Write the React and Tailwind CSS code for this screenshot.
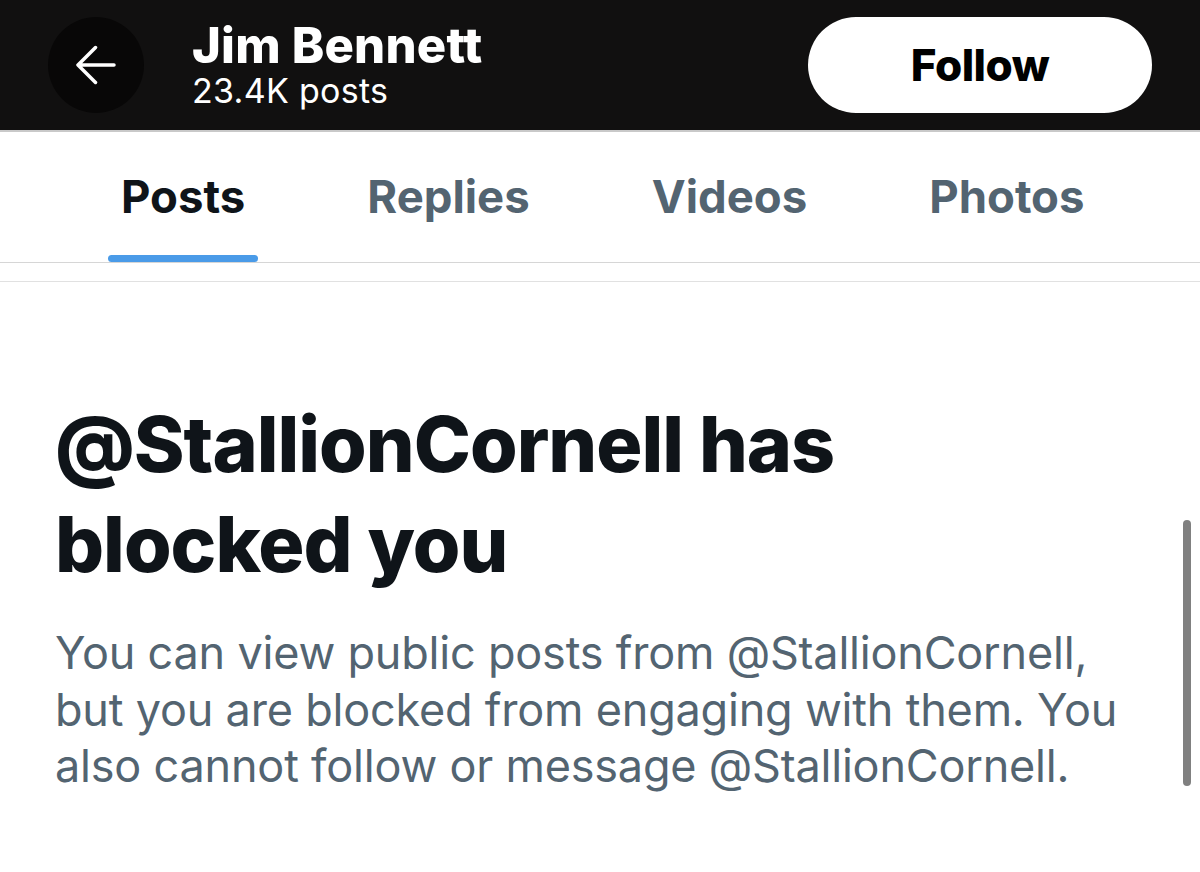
const tabs = [
  { label: 'Posts', active: true },
  { label: 'Replies' },
  { label: 'Videos' },
  { label: 'Photos' },
];

function BackArrow() {
  return (
    <svg viewBox="0 0 40 40" className="w-[40px] h-[40px]" fill="none" stroke="white" strokeWidth="3.5" strokeLinecap="round" strokeLinejoin="round" aria-hidden="true">
      <path d="M38 20H2.5M19.5 2.5L2 20l17.5 17.5" />
    </svg>
  );
}

function Header() {
  return (
    <header className="h-[132px] bg-[#111010] border-b-2 border-[#c9c9c9] flex items-center pl-[48px] pr-[48px]">
      <button className="w-[96px] h-[96px] rounded-full bg-[#080707] flex items-center justify-center shrink-0">
        <BackArrow />
      </button>
      <div className="ml-[48px] flex flex-col">
        <span className="text-[49px] leading-[48px] font-extrabold text-white tracking-[0.2px]">Jim Bennett</span>
        <span className="mt-[4px] text-[34px] leading-[34px] text-white tracking-[0.3px]">23.4K posts</span>
      </div>
      <button className="ml-auto w-[344px] h-[96px] rounded-full bg-white text-black text-[44px] font-extrabold tracking-[-0.5px]">
        Follow
      </button>
    </header>
  );
}

function Tabs() {
  return (
    <nav className="h-[131px] bg-white flex pl-[108px] gap-[96px] border-b border-[#d6d6d6]">
      {tabs.map((t) => (
        <div key={t.label} className="relative px-[13px] h-full pt-[37px]">
          <span
            className={`block text-[45.5px] leading-[56px] font-bold ${
              t.active ? 'text-[#0f1419]' : 'text-[#536471]'
            }`}
          >
            {t.label}
          </span>
          {t.active && (
            <span className="absolute left-0 right-0 bottom-0 h-[7px] rounded-full bg-[#4a9be8]" />
          )}
        </div>
      ))}
    </nav>
  );
}

export default function App() {
  return (
    <div
      className="w-[1200px] h-[872px] bg-white overflow-hidden relative"
      style={{ fontFamily: 'Inter, "Noto Sans", "Liberation Sans", sans-serif' }}
    >
      <Header />
      <Tabs />
      <div className="h-[19px] border-b border-[#e1e1e1]" />
      <main className="pl-[55px] pt-[112px]">
        <h1 className="text-[77px] leading-[100px] font-extrabold text-[#0f1419] tracking-[-1px]">
          @StallionCornell has
          <br />
          blocked you
        </h1>
        <p className="mt-[31px] text-[45px] leading-[56.5px] text-[#536471] tracking-[-0.2px] w-[1080px]">
          You can view public posts from @StallionCornell, but you are blocked from engaging with them. You also cannot follow or message @StallionCornell.
        </p>
      </main>
      <div className="absolute right-[9px] top-[520px] w-[8px] h-[266px] rounded-full bg-[#808080]" />
    </div>
  );
}
